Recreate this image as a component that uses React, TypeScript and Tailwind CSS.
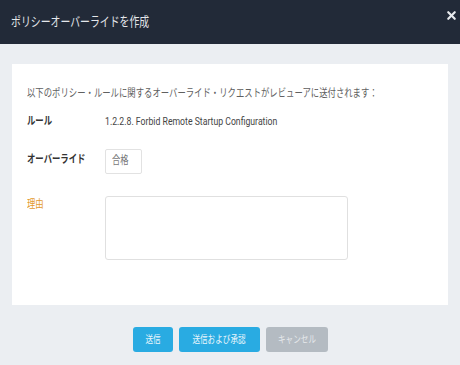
import React from "react";
import { X } from "lucide-react";

const font = { fontFamily: '"Roboto", "Noto Sans CJK JP", sans-serif' };

// the reference renders with a narrow face, so squeeze the text
const Squeeze: React.FC<{ children: React.ReactNode; className?: string; center?: boolean }> = ({
  children,
  className = "",
  center = false,
}) => (
  <span
    className={`inline-block scale-x-[0.76] whitespace-nowrap ${center ? "origin-center" : "origin-left"} ${className}`}
  >
    {children}
  </span>
);

const App: React.FC = () => {
  return (
    <div className="w-[460px] h-[365px] bg-[#ebeef2] flex flex-col overflow-hidden" style={font}>
      {/* Header */}
      <div className="h-[44px] bg-[#222a38] flex items-center justify-between pl-[11px] pr-[2px]">
        <Squeeze className="text-[13px] text-[#e4e7eb]">ポリシーオーバーライドを作成</Squeeze>
        <X className="w-[13px] h-[13px] text-[#e8eaed] mb-[14px]" strokeWidth={4} />
      </div>

      {/* Card */}
      <div className="px-[12px] pt-[20px]">
        <div className="h-[241px] bg-white pl-[15px] pt-[23px]">
          <div className="h-[14px] flex items-center text-[11px] text-[#606060]">
            <Squeeze>以下のポリシー・ルールに関するオーバーライド・リクエストがレビューアに送付されます：</Squeeze>
          </div>

          <div className="mt-[14px] h-[14px] flex items-center text-[11px]">
            <div className="w-[78px] font-bold text-[#333]">
              <Squeeze>ルール</Squeeze>
            </div>
            <span className="inline-block scale-x-[0.79] origin-left whitespace-nowrap text-[#444]">
              1.2.2.8. Forbid Remote Startup Configuration
            </span>
          </div>

          <div className="mt-[20px] flex items-start text-[11px]">
            <div className="w-[78px] pt-[3px] font-bold text-[#333]">
              <Squeeze>オーバーライド</Squeeze>
            </div>
            <div className="w-[37px] h-[25px] border border-[#e2e2e2] rounded-[2px] flex items-center pl-[6px] text-[#777]">
              <Squeeze>合格</Squeeze>
            </div>
          </div>

          <div className="mt-[22px] flex items-start text-[11px]">
            <div className="w-[78px] pt-[1px] text-[#e39a2d]">
              <Squeeze>理由</Squeeze>
            </div>
            <textarea className="w-[243px] h-[64px] border border-[#e0e0e0] rounded-[3px] resize-none outline-none" />
          </div>
        </div>
      </div>

      {/* Buttons */}
      <div className="mt-[22px] flex justify-center gap-[6px] text-[10px]">
        <button className="w-[40px] h-[25px] rounded-[3px] bg-[#29abe2] text-[#eaf6fc] flex items-center justify-center">
          <Squeeze center>送信</Squeeze>
        </button>
        <button className="w-[81px] h-[25px] rounded-[3px] bg-[#29abe2] text-[#eaf6fc] flex items-center justify-center">
          <Squeeze center>送信および承認</Squeeze>
        </button>
        <button className="w-[62px] h-[25px] rounded-[3px] bg-[#b4bbc2] text-[#e6e9ec] flex items-center justify-center">
          <Squeeze center>キャンセル</Squeeze>
        </button>
      </div>
    </div>
  );
};

export default App;
